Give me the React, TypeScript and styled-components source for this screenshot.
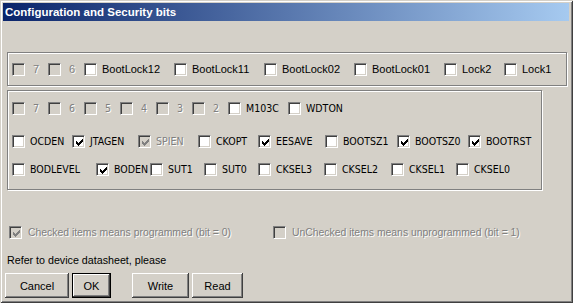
import { createGlobalStyle, styled } from "styled-components";

const GlobalStyle = createGlobalStyle`
  html, body {
    margin: 0;
    padding: 0;
    background: #d4d0c8;
  }
  * {
    box-sizing: border-box;
  }
`;

const Window = styled.div`
  width: 573px;
  height: 303px;
  background: #d4d0c8;
  padding: 3px 4px 3px 3px;
  box-shadow: inset 1px 1px #d4d0c8, inset -1px -1px #404040, inset 2px 2px #fff,
    inset -2px -2px #808080;
  font-family: "Liberation Sans", Arial, sans-serif;
  font-size: 11px;
  color: #000;
  display: flex;
  flex-direction: column;
`;

const TitleBar = styled.div`
  height: 18px;
  background: linear-gradient(to right, #0a246a, #a6caf0);
  color: #fff;
  font-weight: bold;
  font-size: 11.5px;
  display: flex;
  align-items: center;
  padding-left: 2px;
`;

const Group = styled.div<{ $w: number; $top: number }>`
  width: ${(p) => p.$w}px;
  margin: ${(p) => p.$top}px 0 0 4px;
  border: 1px solid #808080;
  box-shadow: inset 1px 1px #fff, 1px 1px #fff;
  padding: 0 0 0 4px;
  display: flex;
  flex-direction: column;
`;

const Row = styled.div<{ $top: number; $bottom?: number }>`
  display: flex;
  align-items: center;
  height: 13px;
  margin-top: ${(p) => p.$top}px;
  margin-bottom: ${(p) => p.$bottom ?? 0}px;
`;

const Item = styled.label<{ $w?: number; $narrow?: boolean; $size?: number }>`
  display: flex;
  align-items: center;
  flex: none;
  width: ${(p) => (p.$w ? `${p.$w}px` : "auto")};
  font-family: ${(p) =>
    p.$narrow
      ? `"Liberation Sans Narrow", "Arial Narrow", "DejaVu Sans Condensed", sans-serif`
      : `"Liberation Sans", Arial, sans-serif`};
  font-size: ${(p) => p.$size ?? (p.$narrow ? 10.5 : 11)}px;
  white-space: nowrap;
`;

const Box = styled.span<{ $disabled?: boolean }>`
  position: relative;
  flex: none;
  width: 13px;
  height: 13px;
  border-top: 1px solid #808080;
  border-left: 1px solid #808080;
  border-bottom: 1px solid #fff;
  border-right: 1px solid #fff;
  box-shadow: inset 1px 1px #404040, inset -1px -1px #d4d0c8;
  background: ${(p) => (p.$disabled ? "#d4d0c8" : "#fff")};
  svg {
    position: absolute;
    left: 2px;
    top: 2px;
  }
`;

const Text = styled.span<{ $disabled?: boolean; $gap?: number }>`
  margin-left: ${(p) => p.$gap ?? 5}px;
  color: ${(p) => (p.$disabled ? "#808080" : "#000")};
  text-shadow: ${(p) => (p.$disabled ? "1px 1px 0 #fff" : "none")};
  line-height: 13px;
`;

const Note = styled.div`
  margin: 15px 0 0 4px;
  line-height: 13px;
  font-size: 10.7px;
`;

const Buttons = styled.div`
  display: flex;
  margin: 6px 0 0 2px;
`;

const Button = styled.button<{ $w: number; $gap?: number; $default?: boolean }>`
  width: ${(p) => p.$w}px;
  height: 25px;
  margin-left: ${(p) => p.$gap ?? 0}px;
  padding: 0;
  background: #d4d0c8;
  font-family: "Liberation Sans", Arial, sans-serif;
  font-size: 11px;
  color: #000;
  border: ${(p) => (p.$default ? "1px solid #000" : "none")};
  box-shadow: inset -1px -1px #404040, inset 1px 1px #fff, inset -2px -2px #808080,
    inset 2px 2px #d4d0c8;
`;

const OptionRow = styled.div`
  display: flex;
  align-items: center;
  height: 13px;
  margin: 36px 0 0 6px;
`;

const Check = ({ color }: { color: string }) => {
  const cols = [2, 3, 4, 3, 2, 1, 0];
  return (
    <svg width="9" height="9" viewBox="0 0 9 9" shapeRendering="crispEdges">
      {cols.map((y, x) => (
        <rect key={x} x={x + 1} y={y + 1} width={1} height={3} fill={color} />
      ))}
    </svg>
  );
};

type Bit = { label: string; w?: number; checked?: boolean; disabled?: boolean };

function CheckItem({ bit, narrow }: { bit: Bit; narrow?: boolean }) {
  const digit = /^\d$/.test(bit.label);
  return (
    <Item $w={bit.w} $narrow={narrow}>
      <Box $disabled={bit.disabled}>
        {bit.checked && <Check color={bit.disabled ? "#808080" : "#000"} />}
      </Box>
      <Text $disabled={bit.disabled} $gap={digit ? 8 : 5}>
        {bit.label}
      </Text>
    </Item>
  );
}

const lockBits: Bit[] = [
  { label: "7", w: 36, disabled: true },
  { label: "6", w: 36, disabled: true },
  { label: "BootLock12", w: 90 },
  { label: "BootLock11", w: 90 },
  { label: "BootLock02", w: 90 },
  { label: "BootLock01", w: 90 },
  { label: "Lock2", w: 60 },
  { label: "Lock1" },
];

const extBits: Bit[] = [
  { label: "7", w: 36, disabled: true },
  { label: "6", w: 36, disabled: true },
  { label: "5", w: 36, disabled: true },
  { label: "4", w: 36, disabled: true },
  { label: "3", w: 36, disabled: true },
  { label: "2", w: 36, disabled: true },
  { label: "M103C", w: 60 },
  { label: "WDTON" },
];

const highBits: Bit[] = [
  { label: "OCDEN", w: 60 },
  { label: "JTAGEN", w: 66, checked: true },
  { label: "SPIEN", w: 60, checked: true, disabled: true },
  { label: "CKOPT", w: 60 },
  { label: "EESAVE", w: 67, checked: true },
  { label: "BOOTSZ1", w: 72 },
  { label: "BOOTSZ0", w: 71, checked: true },
  { label: "BOOTRST", checked: true },
];

const lowBits: Bit[] = [
  { label: "BODLEVEL", w: 84 },
  { label: "BODEN", w: 54, checked: true },
  { label: "SUT1", w: 54 },
  { label: "SUT0", w: 54 },
  { label: "CKSEL3", w: 66 },
  { label: "CKSEL2", w: 67 },
  { label: "CKSEL1", w: 65 },
  { label: "CKSEL0" },
];

export default function App() {
  return (
    <>
      <GlobalStyle />
      <Window>
        <TitleBar>Configuration and Security bits</TitleBar>

        <Group $w={560} $top={31}>
          <Row $top={10} $bottom={9}>
            {lockBits.map((b, i) => (
              <CheckItem key={i} bit={b} />
            ))}
          </Row>
        </Group>

        <Group $w={535} $top={4}>
          <Row $top={11}>
            {extBits.map((b, i) => (
              <CheckItem key={i} bit={b} narrow />
            ))}
          </Row>
          <Row $top={20}>
            {highBits.map((b, i) => (
              <CheckItem key={i} bit={b} narrow />
            ))}
          </Row>
          <Row $top={15} $bottom={13}>
            {lowBits.map((b, i) => (
              <CheckItem key={i} bit={b} narrow />
            ))}
          </Row>
        </Group>

        <OptionRow>
          <Item $w={264} $size={10.4}>
            <Box $disabled>
              <Check color="#808080" />
            </Box>
            <Text $disabled $gap={6}>
              Checked items means programmed (bit = 0)
            </Text>
          </Item>
          <Item $size={10.4}>
            <Box $disabled />
            <Text $disabled $gap={6}>
              UnChecked items means unprogrammed (bit = 1)
            </Text>
          </Item>
        </OptionRow>

        <Note>Refer to device datasheet, please</Note>

        <Buttons>
          <Button $w={64}>Cancel</Button>
          <Button $w={39} $gap={3} $default>
            OK
          </Button>
          <Button $w={57} $gap={21}>
            Write
          </Button>
          <Button $w={51} $gap={3}>
            Read
          </Button>
        </Buttons>
      </Window>
    </>
  );
}
